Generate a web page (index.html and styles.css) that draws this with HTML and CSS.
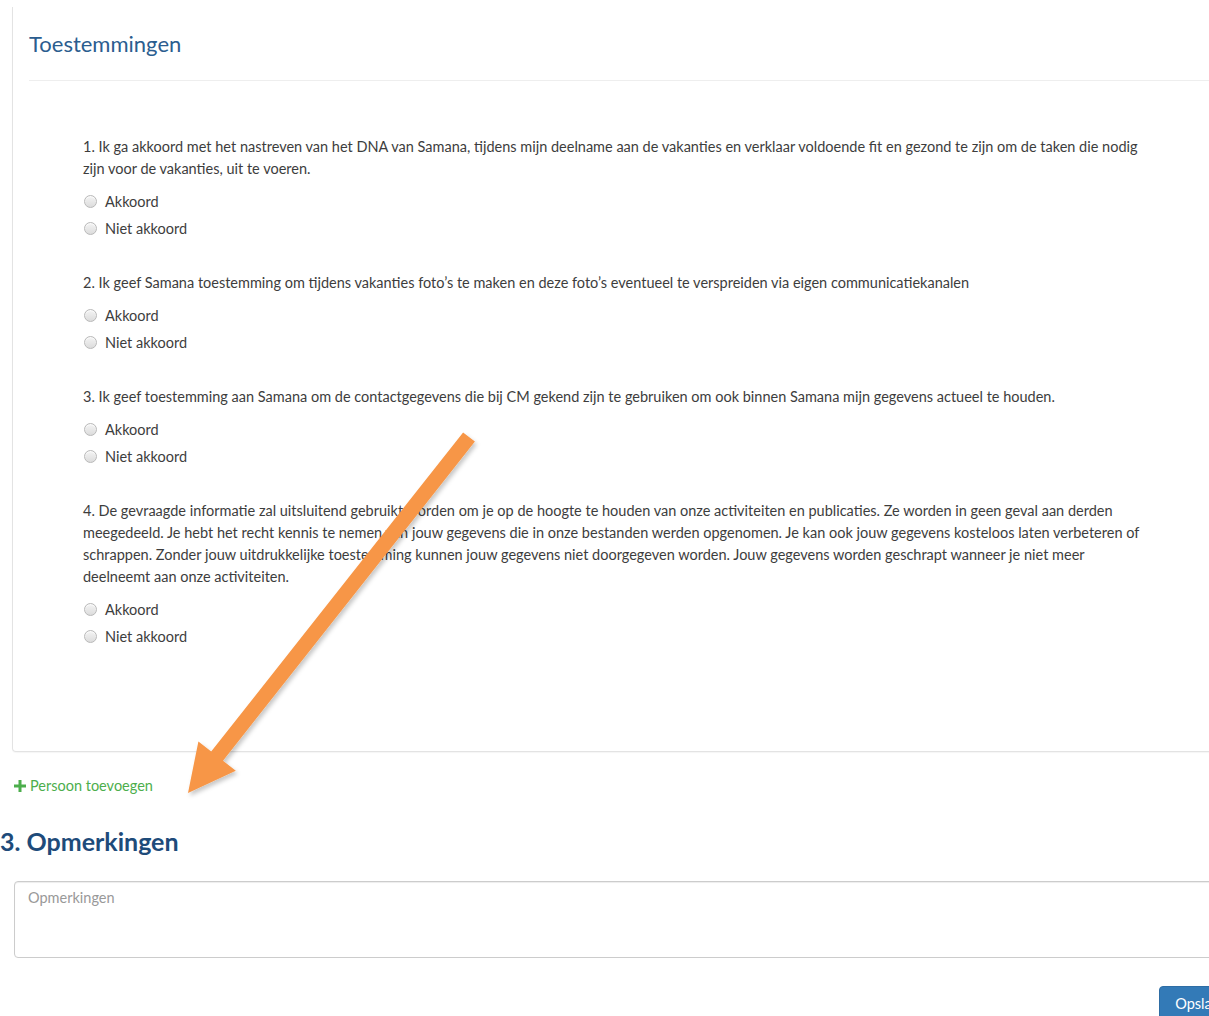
FILE: index.html
```html
<!DOCTYPE html>
<html lang="nl">
<head>
<meta charset="utf-8">
<title>Inschrijving</title>
<link rel="stylesheet" href="styles.css">
</head>
<body>
<div class="page">
  <section class="panel">
    <h3 class="panel-title">Toestemmingen</h3>
    <hr class="divider">
    <div class="questions">
      <div class="question">
        <p class="question-text">1. Ik ga akkoord met het nastreven van het DNA van Samana, tijdens mijn deelname aan de vakanties en verklaar voldoende fit en gezond te zijn om de taken die nodig zijn voor de vakanties, uit te voeren.</p>
        <label class="choice"><input type="radio" name="q1"><span>Akkoord</span></label>
        <label class="choice"><input type="radio" name="q1"><span>Niet akkoord</span></label>
      </div>
      <div class="question">
        <p class="question-text">2. Ik geef Samana toestemming om tijdens vakanties foto’s te maken en deze foto’s eventueel te verspreiden via eigen communicatiekanalen</p>
        <label class="choice"><input type="radio" name="q2"><span>Akkoord</span></label>
        <label class="choice"><input type="radio" name="q2"><span>Niet akkoord</span></label>
      </div>
      <div class="question">
        <p class="question-text">3. Ik geef toestemming aan Samana om de contactgegevens die bij CM gekend zijn te gebruiken om ook binnen Samana mijn gegevens actueel te houden.</p>
        <label class="choice"><input type="radio" name="q3"><span>Akkoord</span></label>
        <label class="choice"><input type="radio" name="q3"><span>Niet akkoord</span></label>
      </div>
      <div class="question">
        <p class="question-text">4. De gevraagde informatie zal uitsluitend gebruikt worden om je op de hoogte te houden van onze activiteiten en publicaties. Ze worden in geen geval aan derden meegedeeld. Je hebt het recht kennis te nemen van jouw gegevens die in onze bestanden werden opgenomen. Je kan ook jouw gegevens kosteloos laten verbeteren of schrappen. Zonder jouw uitdrukkelijke toestemming kunnen jouw gegevens niet doorgegeven worden. Jouw gegevens worden geschrapt wanneer je niet meer deelneemt aan onze activiteiten.</p>
        <label class="choice"><input type="radio" name="q4"><span>Akkoord</span></label>
        <label class="choice"><input type="radio" name="q4"><span>Niet akkoord</span></label>
      </div>
    </div>
  </section>

  <a class="add-person" href="#"><svg class="plus" viewBox="0 0 12 12" width="12" height="12"><path d="M4.5 0h3v4.5H12v3H7.5V12h-3V7.5H0v-3h4.5z" fill="#4cae4c"/></svg>Persoon toevoegen</a>

  <h2 class="section-title">3. Opmerkingen</h2>
  <textarea class="remarks" placeholder="Opmerkingen"></textarea>

  <div class="actions">
    <button class="btn-primary" type="button">Opslaan</button>
  </div>

  <!-- callout arrow pointing at the add-person link -->
  <svg class="callout" width="1209" height="1016" viewBox="0 0 1209 1016">
    <defs>
      <filter id="soft-shadow" x="-20%" y="-20%" width="140%" height="140%">
        <feDropShadow dx="2" dy="3" stdDeviation="2" flood-color="#000" flood-opacity="0.22"/>
      </filter>
    </defs>
    <polygon filter="url(#soft-shadow)" fill="#f79646"
      points="463.1,432.4 474.9,441.6 223,760.7 235.8,770.8 188,793 198.4,741.4 211.2,751.5"/>
  </svg>
</div>
</body>
</html>
```

FILE: styles.css
```css
html, body {
  margin: 0;
  padding: 0;
  background: #fff;
  overflow: hidden;
}

body {
  font-family: "Lato", "Open Sans", sans-serif;
  font-size: 14.5px;
  line-height: 22px;
  color: #3d3d3d;
}

.page {
  position: relative;
  width: 1240px;
  padding-top: 7px;
}

/* consent panel, its top edge scrolled out of view */
.panel {
  margin-left: 12px;
  width: 1240px;
  border: 1px solid #e3e3e3;
  border-top: none;
  border-radius: 0 0 4px 4px;
  box-shadow: 0 1px 1px rgba(0, 0, 0, 0.04);
  padding: 25px 0 101px 16px;
}

.panel-title {
  margin: 0;
  font-size: 22px;
  font-weight: 400;
  line-height: 24px;
  color: #2b5d8f;
}

.divider {
  margin: 24px 0 0;
  border: 0;
  border-top: 1px solid #eee;
}

.questions {
  padding: 55px 0 0 54px;
  width: 1065px;
}

.question {
  margin-bottom: 30px;
}

.question:last-child {
  margin-bottom: 0;
}

.question-text {
  margin: 0 0 8px;
}

.choice {
  display: flex;
  align-items: center;
  height: 27px;
  cursor: pointer;
}

.choice input {
  appearance: none;
  -webkit-appearance: none;
  width: 13px;
  height: 13px;
  margin: 0 8px 0 1px;
  border: 1px solid #b9b9b9;
  border-radius: 50%;
  background: linear-gradient(#f4f4f4, #dcdcdc);
  box-shadow: inset 0 1px 1px rgba(255, 255, 255, 0.8);
}

.add-person {
  display: flex;
  align-items: center;
  margin: 24px 0 0 14px;
  line-height: 20px;
  color: #4cae4c;
  text-decoration: none;
  width: max-content;
}

.plus {
  margin-right: 4px;
}

.section-title {
  margin: 30px 0 0;
  font-size: 25px;
  line-height: 30px;
  font-weight: 700;
  color: #1e4b7a;
}

.remarks {
  display: block;
  box-sizing: border-box;
  margin: 25px 0 0 14px;
  width: 1226px;
  height: 77px;
  padding: 6px 13px;
  border: 1px solid #ccc;
  border-radius: 4px;
  box-shadow: inset 0 1px 1px rgba(0, 0, 0, 0.075);
  font-family: inherit;
  font-size: 14.5px;
  line-height: 20px;
  color: #555;
  resize: none;
}

.remarks::placeholder {
  color: #999;
}

.actions {
  display: flex;
  justify-content: flex-end;
  margin: 28px -3px 0 0;
}

.btn-primary {
  padding: 7px 15px;
  border: 1px solid #2e6da4;
  border-radius: 4px;
  background: #337ab7;
  color: #fff;
  font-family: inherit;
  font-size: 14.5px;
  line-height: 20px;
}

.callout {
  position: absolute;
  left: 0;
  top: 0;
  pointer-events: none;
}
```
